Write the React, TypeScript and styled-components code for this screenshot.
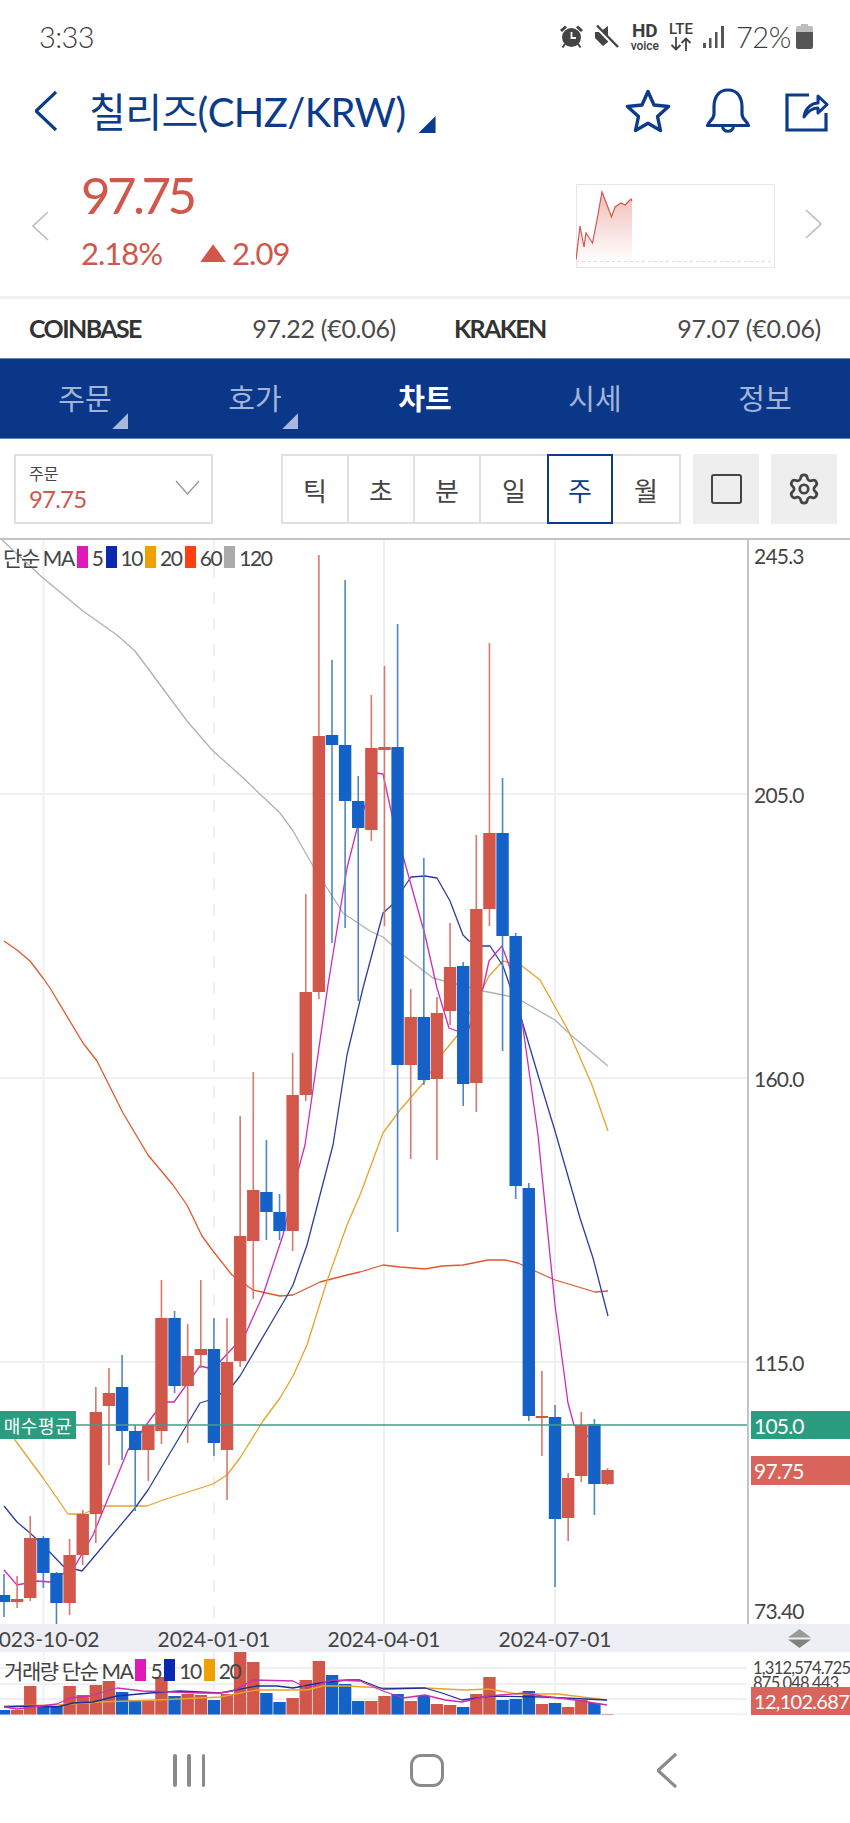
import React from 'react'
import styled, { createGlobalStyle } from 'styled-components'
import { Settings } from 'lucide-react'

const navy = '#0d3b8c'
const red = '#d1574b'
const blue = '#1461c8'
const green = '#2a9d80'
const text = '#444444'

const GlobalStyle = createGlobalStyle`
	html, body {
		margin: 0;
		padding: 0;
		background: #fff;
	}
	body {
		font-family: 'Lato', 'Noto Sans CJK KR', sans-serif;
		color: ${text};
	}
	* {
		box-sizing: border-box;
	}
`

const Page = styled.div`
	width: 850px;
	height: 1823px;
	overflow: hidden;
	display: flex;
	flex-direction: column;
`

const StatusBar = styled.div`
	height: 72px;
	padding: 2px 37px 0 39px;
	display: flex;
	align-items: center;
	justify-content: space-between;
	color: #3d3d3d;
`

const Clock = styled.span`
	font-size: 29px;
	font-weight: 300;
	letter-spacing: -0.6px;
`

const StatusIcons = styled.div`
	display: flex;
	align-items: center;
`

const StackedLabel = styled.span`
	display: flex;
	flex-direction: column;
	align-items: center;
	font-family: 'Roboto', sans-serif;
	line-height: 1;
	margin-left: ${(p) => p.$left}px;
	b {
		font-size: ${(p) => p.$big}px;
		font-weight: 700;
	}
	small {
		font-size: 12px;
		font-weight: 500;
	}
`

const Battery = styled.span`
	font-size: 29px;
	font-weight: 300;
	margin: 0 5px 0 11px;
	letter-spacing: -0.4px;
`

const Header = styled.div`
	height: 78px;
	padding: 0 21px 0 35px;
	display: flex;
	align-items: center;
	color: ${navy};
`

const Title = styled.h1`
	margin: 0 0 2px 32px;
	font-size: 40px;
	font-weight: 400;
	letter-spacing: -0.6px;
	white-space: nowrap;
`

const Corner = styled.i`
	display: block;
	width: ${(p) => p.$size}px;
	height: ${(p) => p.$size}px;
	background: ${(p) => p.$color};
	clip-path: polygon(100% 0, 100% 100%, 0 100%);
`

const TitleCorner = styled(Corner)`
	margin: 28px 0 0 13px;
`

const HeaderActions = styled.div`
	margin-left: auto;
	display: flex;
	align-items: center;
	gap: 34px;
`

const PriceBlock = styled.div`
	height: 150px;
	padding: 6px 28px 0 32px;
	display: flex;
	align-items: center;
	border-bottom: 3px solid #f0f0f0;
`

const PriceColumn = styled.div`
	margin-left: 32px;
	color: ${red};
	display: flex;
	flex-direction: column;
	gap: 10px;
	padding-bottom: 15px;
`

const BigPrice = styled.div`
	font-size: 51px;
	font-weight: 400;
	line-height: 60px;
	letter-spacing: -3.6px;
`

const ChangeRow = styled.div`
	display: flex;
	align-items: center;
	font-size: 31px;
	font-weight: 400;
	line-height: 36px;
	letter-spacing: -1px;
`

const UpTriangle = styled.i`
	width: 26px;
	height: 18px;
	margin: 0 6px 0 38px;
	background: ${red};
	clip-path: polygon(50% 0, 100% 100%, 0 100%);
`

const Sparkline = styled.div`
	margin-left: auto;
	width: 199px;
	height: 84px;
	border: 1px solid #e6e6e6;
	svg {
		display: block;
		margin: -1px;
	}
`

const RightPager = styled.div`
	margin-left: 30px;
`

const ExchangeRow = styled.div`
	height: 59px;
	padding: 0 29px;
	display: flex;
	align-items: center;
	gap: 58px;
`

const ExchangeCell = styled.div`
	flex: 1;
	display: flex;
	justify-content: space-between;
	font-size: 25px;
	color: #4a4a4a;
	strong {
		font-weight: 700;
		color: #333;
		letter-spacing: -1.6px;
	}
	span {
		font-weight: 400;
		letter-spacing: -0.3px;
	}
`

const TabBar = styled.nav`
	height: 82px;
	background: #0a3788;
	border-top: 1px solid #5f86ba;
	border-bottom: 1px solid #5f86ba;
	display: grid;
	grid-template-columns: repeat(5, 1fr);
`

const Tab = styled.div`
	position: relative;
	display: flex;
	align-items: center;
	justify-content: center;
	font-size: 29px;
	padding-bottom: 3px;
	color: ${(p) => (p.$active ? '#fff' : '#a3b4d8')};
	font-weight: ${(p) => (p.$active ? 700 : 400)};
`

const TabCorner = styled(Corner)`
	position: absolute;
	right: 42px;
	bottom: 9px;
`

const Toolbar = styled.div`
	height: 99px;
	padding: 15px 13px 14px 14px;
	display: flex;
`

const Picker = styled.div`
	position: relative;
	width: 199px;
	height: 70px;
	border: 2px solid #e0e0e0;
	padding: 7px 0 0 13px;
	svg {
		position: absolute;
		right: 11px;
		top: 24px;
	}
`

const PickerLabel = styled.div`
	font-size: 16px;
	line-height: 22px;
	color: #444;
`

const PickerValue = styled.div`
	font-size: 24px;
	line-height: 28px;
	color: ${red};
	letter-spacing: -0.8px;
`

const Segments = styled.div`
	margin-left: 68px;
	width: 400px;
	height: 70px;
	display: grid;
	grid-template-columns: repeat(6, 1fr);
	border: 2px solid #e0e0e0;
`

const Segment = styled.div`
	display: flex;
	align-items: center;
	justify-content: center;
	font-size: 26px;
	margin: ${(p) => (p.$active ? '-2px 0' : '0')};
	color: ${(p) => (p.$active ? navy : '#444')};
	border: ${(p) => (p.$active ? `2px solid ${navy}` : 'none')};
	border-right: ${(p) =>
		p.$active ? `2px solid ${navy}` : p.$last || p.$beforeActive ? 'none' : '2px solid #e0e0e0'};
`

const SquareButton = styled.div`
	width: 66px;
	height: 70px;
	margin-left: ${(p) => p.$left}px;
	background: #eeeeee;
	display: flex;
	align-items: center;
	justify-content: center;
	color: #444;
`

const Screen = styled.i`
	display: block;
	width: 31px;
	height: 30px;
	border: 2.5px solid #444;
	border-radius: 3px;
`

const ChartRow = styled.div`
	height: 1086px;
	display: flex;
	border-top: 2px solid #c4c4c4;
`

const Plot = styled.div`
	position: relative;
	width: 747px;
	svg {
		display: block;
	}
`

const Axis = styled.div`
	position: relative;
	flex: 1;
	border-left: 2px solid #c4c4c4;
`

const Tick = styled.span`
	position: absolute;
	left: 5px;
	top: ${(p) => p.$y}px;
	transform: translateY(-50%);
	font-size: 21px;
	letter-spacing: -0.8px;
	color: ${text};
`

const PriceTag = styled.div`
	position: absolute;
	left: 2px;
	right: 0;
	top: ${(p) => p.$y}px;
	height: ${(p) => p.$h}px;
	padding-left: 3px;
	display: flex;
	align-items: center;
	background: ${(p) => p.$color};
	color: #fff;
	font-size: ${(p) => p.$size}px;
	letter-spacing: ${(p) => p.$spacing}px;
	white-space: nowrap;
`

const AverageLabel = styled.div`
	position: absolute;
	left: 0;
	top: 871px;
	width: 76px;
	height: 28px;
	background: ${green};
	color: #fff;
	font-size: 18px;
	display: flex;
	align-items: center;
	justify-content: center;
	letter-spacing: 0.6px;
`

const Legend = styled.div`
	position: absolute;
	left: ${(p) => p.$left}px;
	top: ${(p) => p.$top}px;
	display: flex;
	align-items: center;
	font-size: ${(p) => p.$size}px;
	letter-spacing: ${(p) => p.$spacing}px;
	color: ${text};
	white-space: nowrap;
`

const Swatch = styled.i`
	display: block;
	width: 11px;
	height: 22px;
	margin: 0 4px 0 3px;
	background: ${(p) => p.$color};
`

const DateBand = styled.div`
	position: relative;
	height: 28px;
	background: #eeeff4;
	overflow: hidden;
`

const DateLabel = styled.span`
	position: absolute;
	left: ${(p) => p.$x}px;
	top: 50%;
	transform: translate(-50%, -50%);
	font-size: 21px;
	color: ${text};
	white-space: nowrap;
`

const Stepper = styled.svg`
	position: absolute;
	left: 788px;
	top: 5px;
`

const VolumeRow = styled.div`
	height: 63px;
	display: flex;
	overflow: hidden;
`

const VolumeAxis = styled.div`
	position: relative;
	flex: 1;
	border-left: 2px solid transparent;
`

const VolumeTick = styled.span`
	position: absolute;
	left: 4px;
	top: ${(p) => p.$y}px;
	transform: translateY(-50%);
	font-size: 16.5px;
	letter-spacing: -0.75px;
	color: ${text};
	white-space: nowrap;
`

const SystemNav = styled.div`
	flex: 1;
	padding: 38px 0 35px 173px;
	display: flex;
	align-items: center;
	gap: 209px;
`

const Bars = styled.div`
	width: 32px;
	display: flex;
	justify-content: space-between;
	i {
		display: block;
		width: 3.5px;
		height: 33px;
		background: #8b8b8b;
		border-radius: 2px;
	}
`

const Home = styled.i`
	display: block;
	width: 34px;
	height: 33px;
	margin: 0 4px 0 -4px;
	border: 3.5px solid #8b8b8b;
	border-radius: 11px;
`

// kind, body top, body bottom, wick top, wick bottom
type Candle = ['r' | 'b', number, number, number, number]

const candles: Candle[] = [
	['b', 1597, 1604, 1576, 1619],
	['r', 1601, 1604, 1578, 1610],
	['r', 1540, 1600, 1518, 1603],
	['b', 1540, 1575, 1538, 1590],
	['b', 1575, 1605, 1574, 1626],
	['r', 1557, 1605, 1541, 1617],
	['r', 1516, 1557, 1512, 1567],
	['r', 1414, 1516, 1389, 1545],
	['r', 1395, 1408, 1370, 1467],
	['b', 1389, 1433, 1357, 1462],
	['b', 1433, 1452, 1427, 1513],
	['r', 1427, 1452, 1427, 1483],
	['r', 1320, 1433, 1282, 1446],
	['b', 1320, 1388, 1313, 1395],
	['r', 1358, 1388, 1326, 1445],
	['r', 1351, 1357, 1282, 1370],
	['b', 1351, 1445, 1320, 1458],
	['r', 1364, 1452, 1320, 1502],
	['r', 1238, 1363, 1118, 1369],
	['r', 1192, 1243, 1074, 1301],
	['b', 1194, 1214, 1142, 1242],
	['b', 1214, 1233, 1196, 1242],
	['r', 1097, 1233, 1055, 1253],
	['r', 994, 1097, 896, 1103],
	['r', 738, 994, 557, 1001],
	['b', 737, 747, 662, 945],
	['b', 747, 803, 582, 930],
	['b', 803, 830, 778, 1003],
	['r', 750, 832, 697, 843],
	['r', 749, 752, 668, 928],
	['b', 749, 1067, 626, 1234],
	['r', 1019, 1067, 991, 1161],
	['b', 1019, 1082, 860, 1087],
	['r', 1015, 1081, 999, 1162],
	['r', 969, 1013, 925, 1027],
	['b', 968, 1086, 964, 1108],
	['r', 911, 1085, 837, 1114],
	['r', 835, 911, 645, 928],
	['b', 835, 938, 780, 1053],
	['b', 938, 1188, 935, 1201],
	['b', 1190, 1418, 1185, 1423],
	['r', 1418, 1420, 1373, 1458],
	['b', 1419, 1521, 1407, 1589],
	['r', 1480, 1520, 1475, 1543],
	['r', 1427, 1478, 1414, 1484],
	['b', 1426, 1486, 1421, 1517],
	['r', 1472, 1486, 1470, 1487],
]

const volumes: number[] = [
	1712, 1712, 1688, 1708, 1708, 1688, 1697, 1687, 1683, 1694, 1702, 1703, 1679, 1698, 1696, 1697,
	1702, 1696, 1654, 1664, 1695, 1704, 1700, 1682, 1663, 1677, 1686, 1703, 1703, 1698, 1696, 1703,
	1698, 1706, 1707, 1709, 1696, 1679, 1702, 1701, 1693, 1706, 1705, 1709, 1702, 1705, 1716,
]

const ma120 =
	'0,540 43,580 83,613 117,637 135,653 187,723 213,753 240,777 280,815 293,833 313,868 343,915 370,933 383,939 403,957 433,980 483,993 508,998 522,1003 555,1022 572,1038 608,1068'
const ma60 =
	'4,943 17,952 30,963 43,980 50,990 83,1045 97,1063 108,1085 123,1115 148,1157 173,1187 187,1207 202,1238 213,1253 232,1277 253,1292 280,1298 293,1297 320,1284 347,1277 360,1274 383,1267 400,1269 425,1271 442,1268 463,1267 488,1262 505,1262 518,1265 535,1273 555,1282 572,1287 595,1294 608,1293'
const ma20 =
	'0,1418 15,1442 43,1480 68,1516 83,1516 102,1508 147,1508 163,1502 213,1486 227,1477 240,1460 263,1423 280,1400 293,1378 307,1347 327,1283 347,1227 360,1197 383,1135 400,1112 425,1083 443,1055 457,1038 483,990 489,978 503,963 522,968 540,982 568,1032 592,1087 608,1133'
const ma10 =
	'4,1508 17,1524 30,1535 43,1547 63,1568 82,1573 93,1560 135,1510 148,1492 173,1450 200,1405 213,1401 233,1387 240,1378 267,1332 287,1298 293,1287 307,1247 333,1147 347,1057 363,990 383,915 392,907 411,879 425,878 437,880 450,903 463,937 469,943 482,948 490,948 503,968 522,1023 538,1077 555,1133 580,1220 593,1260 608,1318'
const ma5 =
	'4,1572 17,1587 37,1583 50,1584 75,1568 93,1537 128,1452 155,1415 167,1404 174,1404 200,1368 213,1371 245,1337 263,1297 283,1237 298,1173 305,1147 328,987 347,870 358,827 377,775 383,776 397,840 403,858 425,937 437,990 449,1030 457,1033 468,1033 483,990 489,963 502,948 510,970 522,1023 538,1137 555,1307 568,1405 574,1427 590,1440'

const volMa5 =
	'4,1709 17,1711 57,1706 70,1700 90,1698 117,1690 143,1693 200,1695 220,1695 233,1693 253,1682 293,1683 307,1690 333,1682 360,1683 383,1693 403,1700 425,1697 445,1702 462,1704 488,1698 525,1695 542,1698 575,1702 607,1707'
const volMa10 =
	'4,1709 33,1708 57,1709 73,1705 93,1704 117,1698 150,1695 180,1693 220,1695 257,1688 277,1688 293,1690 320,1685 347,1682 360,1682 383,1691 425,1690 442,1695 462,1702 492,1698 542,1699 607,1702'
const volMa20 =
	'4,1708 57,1707 100,1704 157,1702 220,1699 257,1692 307,1692 323,1688 347,1688 383,1690 425,1690 465,1692 488,1691 518,1696 558,1696 607,1702'

const candleX = (i: number) => 4 + i * 13.12

const GridLines = ({ top, bottom, rows }: { top: number; bottom: number; rows: number[] }) => (
	<g stroke="#eff0f4" strokeWidth="2">
		<line x1="43.5" x2="43.5" y1={top} y2={bottom} />
		<line x1="214" x2="214" y1={top} y2={bottom} strokeDasharray="12 14" />
		<line x1="384" x2="384" y1={top} y2={bottom} />
		<line x1="555" x2="555" y1={top} y2={bottom} />
		{rows.map((y) => (
			<line key={y} x1="0" x2="747" y1={y} y2={y} />
		))}
	</g>
)

const MaLine = ({ points, color, width }: { points: string; color: string; width?: number }) => (
	<polyline points={points} fill="none" stroke={color} strokeWidth={width ?? 1.3} strokeLinejoin="round" />
)

const PriceChart = () => (
	<svg width="747" height="1084" viewBox="0 542 747 1084">
		<GridLines top={542} bottom={1626} rows={[796, 1080, 1364]} />
		<MaLine points={ma120} color="#b0b0b0" />
		<MaLine points={ma60} color="#e2582c" />
		<MaLine points={ma20} color="#e6a429" />
		<MaLine points={ma10} color="#2b3f9c" />
		<MaLine points={ma5} color="#cf2cb4" />
		{candles.map(([kind, bodyTop, bodyBottom, wickTop, wickBottom], i) => (
			<g key={i}>
				<line
					x1={candleX(i)}
					x2={candleX(i)}
					y1={wickTop}
					y2={wickBottom}
					stroke={kind === 'r' ? '#d9786d' : '#4f86c6'}
					strokeWidth="1.6"
				/>
				<rect
					x={candleX(i) - 6.2}
					width="12.4"
					y={bodyTop}
					height={bodyBottom - bodyTop}
					fill={kind === 'r' ? red : blue}
				/>
			</g>
		))}
		<line x1="0" x2="747" y1="1427" y2="1427" stroke="#3f9f86" strokeWidth="1.6" />
	</svg>
)

const VolumeChart = () => (
	<svg width="747" height="63" viewBox="0 1654 747 63">
		<GridLines top={1654} bottom={1717} rows={[1670, 1686, 1701, 1716.5]} />
		{volumes.map((top, i) => (
			<rect
				key={i}
				x={candleX(i) - 6.2}
				width="12.4"
				y={top}
				height={1716.5 - top}
				fill={candles[i][0] === 'r' ? red : blue}
			/>
		))}
		<MaLine points={volMa20} color="#e6a429" />
		<MaLine points={volMa10} color="#1c2f96" />
		<MaLine points={volMa5} color="#cf2cb4" />
	</svg>
)

const AlarmIcon = () => (
	<svg width="25" height="25" viewBox="0 0 25 25">
		<circle cx="12.5" cy="13.5" r="9.5" fill="#444" />
		<path d="M1 6 L6 1.5 L8 3.5 L3 8Z M24 6 L19 1.5 L17 3.5 L22 8Z" fill="#444" />
		<path d="M3.5 23.5 L6 20 M21.5 23.5 L19 20" stroke="#444" strokeWidth="2" />
		<path d="M12.5 8 V14 H17" stroke="#fff" strokeWidth="1.8" fill="none" />
	</svg>
)

const MuteIcon = () => (
	<svg width="25" height="25" viewBox="0 0 25 25">
		<path d="M1 8 H6 L14 2 V18 L9 22 L1 14Z" fill="#444" />
		<path d="M1.5 2 L23 24" stroke="#fff" strokeWidth="3.5" />
		<path d="M3 1.5 L24 23" stroke="#444" strokeWidth="2.4" />
	</svg>
)

const ArrowsIcon = () => (
	<svg width="22" height="14" viewBox="0 0 22 14">
		<path
			d="M6 0 V12 M1.5 8 L6 12.5 L10.5 8 M16 14 V2 M11.5 6 L16 1.5 L20.5 6"
			stroke="#444"
			strokeWidth="1.8"
			fill="none"
		/>
	</svg>
)

const SignalIcon = () => (
	<svg width="22" height="22" viewBox="0 0 22 22" style={{ marginLeft: 10 }}>
		<g fill="#555">
			<rect x="0" y="17" width="3" height="5" />
			<rect x="6" y="12" width="2.5" height="10" />
			<rect x="12" y="6" width="2.5" height="16" />
			<rect x="18" y="0" width="3" height="22" />
		</g>
	</svg>
)

const BatteryIcon = () => (
	<svg width="17" height="25" viewBox="0 0 17 25">
		<path d="M5 0 H12 V2 H15 Q17 2 17 4 V8 H0 V4 Q0 2 2 2 H5Z" fill="#bdbdbd" />
		<path d="M0 8 H17 V23 Q17 25 15 25 H2 Q0 25 0 23Z" fill="#555" />
	</svg>
)

const Chevron = ({ dir, width, height, color, stroke }: { dir: 'l' | 'r' | 'd'; width: number; height: number; color: string; stroke: number }) => {
	const d =
		dir === 'l'
			? `M${width - 1} 1 L1 ${height / 2} L${width - 1} ${height - 1}`
			: dir === 'r'
				? `M1 1 L${width - 1} ${height / 2} L1 ${height - 1}`
				: `M1 1 L${width / 2} ${height - 1} L${width - 1} 1`
	return (
		<svg width={width} height={height} viewBox={`0 0 ${width} ${height}`}>
			<path d={d} fill="none" stroke={color} strokeWidth={stroke} />
		</svg>
	)
}

const StarIcon = () => (
	<svg width="46" height="44" viewBox="0 0 46 44">
		<path
			d="M23 2.5 L29 16 L43.5 17.5 L32.5 27.5 L35.5 41.5 L23 34.2 L10.5 41.5 L13.5 27.5 L2.5 17.5 L17 16Z"
			fill="none"
			stroke={navy}
			strokeWidth="3.4"
			strokeLinejoin="round"
		/>
	</svg>
)

const BellIcon = () => (
	<svg width="46" height="45" viewBox="0 0 46 45">
		<path
			d="M23 2 C13 2 9 10 9 19 V26 C9 31 4 33 2.5 37.5 H43.5 C42 33 37 31 37 26 V19 C37 10 33 2 23 2Z"
			fill="none"
			stroke={navy}
			strokeWidth="3.2"
			strokeLinejoin="round"
		/>
		<path d="M17.5 38 C18 45 28 45 28.5 38" fill="none" stroke={navy} strokeWidth="3.2" />
	</svg>
)

const ShareIcon = () => (
	<svg width="44" height="42" viewBox="0 0 44 42">
		<path d="M24 5 H2 V40 H41 V23" fill="none" stroke={navy} strokeWidth="3.2" />
		<path
			d="M19 27 C20 18 27 13 33 13 V6 L42 14.5 L33 23 V18 C28 18 23 21 19 27Z"
			fill="none"
			stroke={navy}
			strokeWidth="3"
			strokeLinejoin="round"
		/>
	</svg>
)

const MiniChart = () => (
	<svg width="199" height="84" viewBox="0 0 199 84">
		<defs>
			<linearGradient id="spark" x1="0" x2="0" y1="0" y2="1">
				<stop offset="0" stopColor="#f0bdb7" />
				<stop offset="1" stopColor="#ffffff" />
			</linearGradient>
		</defs>
		<path
			d="M0 76 L4 42 L8 63 L10 49 L16.5 59 L21 36 L26 8 L33 26 L35.5 33 L39 23 L45 19 L49 21 L55 15 L56 17 V78 H0Z"
			fill="url(#spark)"
		/>
		<polyline
			points="0,76 4,42 8,63 10,49 16.5,59 21,36 26,8 33,26 35.5,33 39,23 45,19 49,21 55,15 56,17"
			fill="none"
			stroke="#d1574b"
			strokeWidth="1.2"
		/>
		<line x1="0" x2="199" y1="77.5" y2="77.5" stroke="#dedede" strokeDasharray="3 3" />
	</svg>
)

const tabs = [
	{ label: '주문', corner: true },
	{ label: '호가', corner: true },
	{ label: '차트', active: true },
	{ label: '시세' },
	{ label: '정보' },
]

const periods = ['틱', '초', '분', '일', '주', '월']

const App = () => (
	<Page>
		<GlobalStyle />
		<StatusBar>
			<Clock>3:33</Clock>
			<StatusIcons>
				<AlarmIcon />
				<span style={{ width: 10 }} />
				<MuteIcon />
				<StackedLabel $left={12} $big={19}>
					<b>HD</b>
					<small>voice</small>
				</StackedLabel>
				<StackedLabel $left={10} $big={16}>
					<span style={{ fontSize: 15, fontWeight: 500 }}>LTE</span>
					<ArrowsIcon />
				</StackedLabel>
				<SignalIcon />
				<Battery>72%</Battery>
				<BatteryIcon />
			</StatusIcons>
		</StatusBar>

		<Header>
			<Chevron dir="l" width={22} height={40} color={navy} stroke={3.2} />
			<Title>칠리즈(CHZ/KRW)</Title>
			<TitleCorner $size={17} $color={navy} />
			<HeaderActions>
				<StarIcon />
				<BellIcon />
				<ShareIcon />
			</HeaderActions>
		</Header>

		<PriceBlock>
			<Chevron dir="l" width={17} height={30} color="#bdbdbd" stroke={1.6} />
			<PriceColumn>
				<BigPrice>97.75</BigPrice>
				<ChangeRow>
					2.18%
					<UpTriangle />
					2.09
				</ChangeRow>
			</PriceColumn>
			<Sparkline>
				<MiniChart />
			</Sparkline>
			<RightPager>
				<Chevron dir="r" width={17} height={30} color="#bdbdbd" stroke={1.6} />
			</RightPager>
		</PriceBlock>

		<ExchangeRow>
			<ExchangeCell>
				<strong>COINBASE</strong>
				<span>97.22 (€0.06)</span>
			</ExchangeCell>
			<ExchangeCell>
				<strong>KRAKEN</strong>
				<span>97.07 (€0.06)</span>
			</ExchangeCell>
		</ExchangeRow>

		<TabBar>
			{tabs.map((tab) => (
				<Tab key={tab.label} $active={tab.active}>
					{tab.label}
					{tab.corner && <TabCorner $size={16} $color="#a8b8dc" />}
				</Tab>
			))}
		</TabBar>

		<Toolbar>
			<Picker>
				<PickerLabel>주문</PickerLabel>
				<PickerValue>97.75</PickerValue>
				<Chevron dir="d" width={25} height={15} color="#9a9a9a" stroke={1.4} />
			</Picker>
			<Segments>
				{periods.map((period, i) => (
					<Segment key={period} $active={period === '주'} $beforeActive={periods[i + 1] === '주'} $last={i === periods.length - 1}>
						{period}
					</Segment>
				))}
			</Segments>
			<SquareButton $left={12}>
				<Screen />
			</SquareButton>
			<SquareButton $left={12}>
				<Settings size={34} strokeWidth={1.9} />
			</SquareButton>
		</Toolbar>

		<ChartRow>
			<Plot>
				<PriceChart />
				<Legend $left={3} $top={2} $size={21} $spacing={-1.4}>
					단순 MA
					<Swatch $color="#e01ab8" />5
					<Swatch $color="#0a28b0" />
					10
					<Swatch $color="#f0a000" />
					20
					<Swatch $color="#ff4010" />
					60
					<Swatch $color="#aaaaaa" />
					120
				</Legend>
				<AverageLabel>매수평균</AverageLabel>
			</Plot>
			<Axis>
				<Tick $y={15}>245.3</Tick>
				<Tick $y={254}>205.0</Tick>
				<Tick $y={538}>160.0</Tick>
				<Tick $y={822}>115.0</Tick>
				<Tick $y={1070}>73.40</Tick>
				<PriceTag $y={871} $h={28} $color={green} $size={21} $spacing={-0.8}>
					105.0
				</PriceTag>
				<PriceTag $y={916} $h={29} $color="#d9645b" $size={21} $spacing={-0.8}>
					97.75
				</PriceTag>
			</Axis>
		</ChartRow>

		<DateBand>
			<DateLabel $x={43}>2023-10-02</DateLabel>
			<DateLabel $x={214}>2024-01-01</DateLabel>
			<DateLabel $x={384}>2024-04-01</DateLabel>
			<DateLabel $x={555}>2024-07-01</DateLabel>
			<Stepper width="23" height="19" viewBox="0 0 23 19">
				<path d="M11.5 0 L23 8.5 H0Z" fill="#9a9a9a" />
				<path d="M0 10.5 H23 L11.5 19Z" fill="#808080" />
			</Stepper>
		</DateBand>

		<VolumeRow>
			<Plot>
				<VolumeChart />
				<Legend $left={4} $top={3} $size={21} $spacing={-1.4}>
					거래량 단순 MA
					<Swatch $color="#e01ab8" />5
					<Swatch $color="#0a28b0" />
					10
					<Swatch $color="#f0a000" />
					20
				</Legend>
			</Plot>
			<VolumeAxis>
				<VolumeTick $y={16}>1,312,574.725</VolumeTick>
				<VolumeTick $y={31}>875,048.443</VolumeTick>
				<PriceTag $y={35} $h={28} $color="#d9645b" $size={20} $spacing={-0.7}>
					12,102.687
				</PriceTag>
			</VolumeAxis>
		</VolumeRow>

		<SystemNav>
			<Bars>
				<i />
				<i />
				<i />
			</Bars>
			<Home />
			<Chevron dir="l" width={20} height={35} color="#8b8b8b" stroke={3.2} />
		</SystemNav>
	</Page>
)

export default App
